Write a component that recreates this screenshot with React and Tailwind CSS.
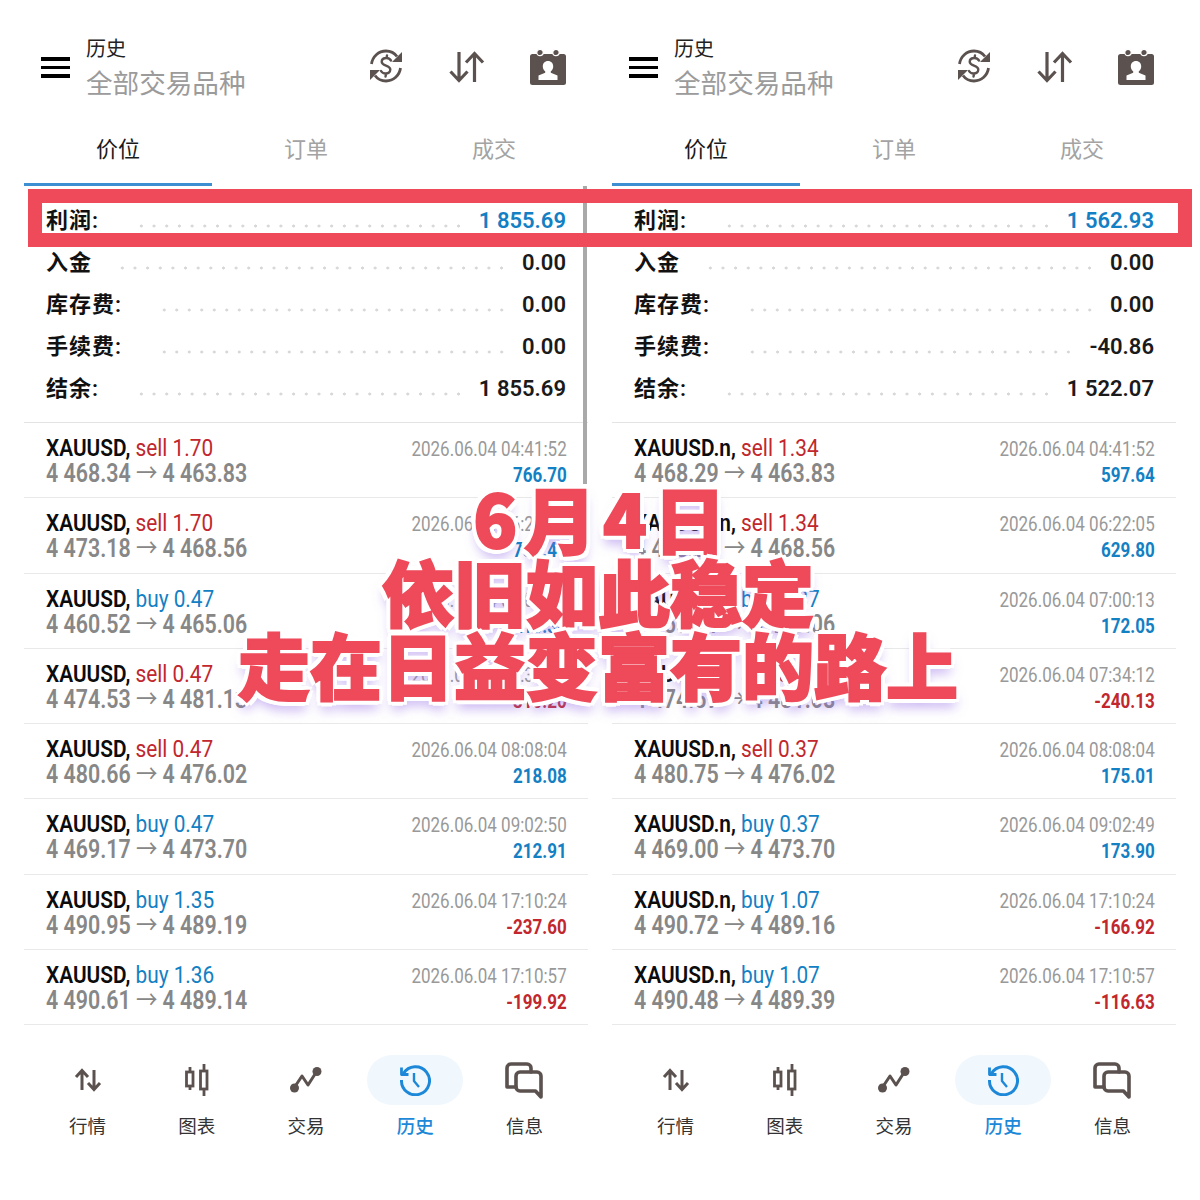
import React from 'react';

const FONT = "font-['Roboto','Noto_Sans_CJK_SC',sans-serif]";

const panels = [
  {
    profit: '1 855.69',
    fee: '0.00',
    balance: '1 855.69',
    trades: [
      ['XAUUSD,', 'sell 1.70', '4 468.34', '4 463.83', '2026.06.04 04:41:52', '766.70'],
      ['XAUUSD,', 'sell 1.70', '4 473.18', '4 468.56', '2026.06.04 06:22:05', '785.40'],
      ['XAUUSD,', 'buy 0.47', '4 460.52', '4 465.06', '2026.06.04 07:00:13', '213.38'],
      ['XAUUSD,', 'sell 0.47', '4 474.53', '4 481.13', '2026.06.04 07:34:12', '-310.20'],
      ['XAUUSD,', 'sell 0.47', '4 480.66', '4 476.02', '2026.06.04 08:08:04', '218.08'],
      ['XAUUSD,', 'buy 0.47', '4 469.17', '4 473.70', '2026.06.04 09:02:50', '212.91'],
      ['XAUUSD,', 'buy 1.35', '4 490.95', '4 489.19', '2026.06.04 17:10:24', '-237.60'],
      ['XAUUSD,', 'buy 1.36', '4 490.61', '4 489.14', '2026.06.04 17:10:57', '-199.92'],
    ],
  },
  {
    profit: '1 562.93',
    fee: '-40.86',
    balance: '1 522.07',
    trades: [
      ['XAUUSD.n,', 'sell 1.34', '4 468.29', '4 463.83', '2026.06.04 04:41:52', '597.64'],
      ['XAUUSD.n,', 'sell 1.34', '4 473.26', '4 468.56', '2026.06.04 06:22:05', '629.80'],
      ['XAUUSD.n,', 'buy 0.37', '4 460.41', '4 465.06', '2026.06.04 07:00:13', '172.05'],
      ['XAUUSD.n,', 'sell 0.37', '4 474.59', '4 481.08', '2026.06.04 07:34:12', '-240.13'],
      ['XAUUSD.n,', 'sell 0.37', '4 480.75', '4 476.02', '2026.06.04 08:08:04', '175.01'],
      ['XAUUSD.n,', 'buy 0.37', '4 469.00', '4 473.70', '2026.06.04 09:02:49', '173.90'],
      ['XAUUSD.n,', 'buy 1.07', '4 490.72', '4 489.16', '2026.06.04 17:10:24', '-166.92'],
      ['XAUUSD.n,', 'buy 1.07', '4 490.48', '4 489.39', '2026.06.04 17:10:57', '-116.63'],
    ],
  },
];

const SyncDollarIcon = () => (
  <svg width="36" height="36" viewBox="0 0 36 36" fill="none" stroke="#5b5250" strokeWidth="2.800" strokeLinejoin="round">
    <path d="M3.500 16C4.500 8.500 10.500 3 18 3c4.500 0 8.500 2 11 5.500" />
    <path d="M32.500 20C31.500 27.500 25.500 33 18 33c-4.500 0-8.500-2-11-5.500" />
    <path d="M34 4v10H24z" fill="#5b5250" stroke="none" />
    <path d="M2 32V22h10z" fill="#5b5250" stroke="none" />
    <path d="M23 12.500c-1-1.500-2.500-2.500-4.500-2.500-2.800 0-4.800 1.500-4.800 3.800 0 4.700 8.600 3 8.600 7.800 0 2.400-2 3.900-4.600 3.900-2.100 0-3.800-.9-4.700-2.500M19 7.500l-.5 2.500M18 26l-.5 2.500" strokeWidth="2.400" strokeLinecap="round" />
  </svg>
);

const SortIcon = () => (
  <svg width="36" height="36" viewBox="0 0 36 36" fill="none" stroke="#5b5250" strokeWidth="3.200" strokeLinejoin="miter">
    <path d="M10 4v28M1.500 23.500 10 32.500l8.500-9" />
    <path d="M25.500 34V5.500M17 14.500l8.500-9 8.500 9" />
  </svg>
);

const CalendarPersonIcon = () => (
  <svg width="38" height="38" viewBox="0 0 38 38">
    <rect x="1" y="6" width="36" height="31" rx="2.500" fill="#5b5250" />
    <circle cx="11" cy="4.500" r="3.200" fill="#5b5250" stroke="#fff" strokeWidth="1.200" />
    <circle cx="27" cy="4.500" r="3.200" fill="#5b5250" stroke="#fff" strokeWidth="1.200" />
    <path d="M19 13c3.200 0 5.200 2.300 5.200 5.400 0 2-1 3.800-2.400 4.800v1.600l6.700 2.800V32H9.500v-4.400l6.700-2.800v-1.600c-1.400-1-2.400-2.800-2.400-4.800 0-3.100 2-5.400 5.200-5.400z" fill="#fff" />
  </svg>
);

const navItems = [
  {
    label: '行情',
    icon: (
      <svg width="28" height="26" viewBox="0 0 28 26" fill="none" stroke="#5b5250" strokeWidth="3">
        <path d="M8 23V4M2 10l6-6.500L14 10" />
        <path d="M20 3v19M14 16l6 6.500 6-6.500" />
      </svg>
    ),
  },
  {
    label: '图表',
    icon: (
      <svg width="28" height="32" viewBox="0 0 28 32" fill="none" stroke="#5b5250" strokeWidth="2.800">
        <path d="M7 3v5M7 22v4M21 0v7M21 25v7" />
        <rect x="3.500" y="8" width="6.500" height="14" />
        <rect x="17.500" y="7" width="6.500" height="18" />
      </svg>
    ),
  },
  {
    label: '交易',
    icon: (
      <svg width="34" height="28" viewBox="0 0 34 28" fill="none" stroke="#5b5250" strokeWidth="3" strokeLinejoin="round">
        <path d="M5 22 13 10l6 9 9-14" />
        <circle cx="5.500" cy="22" r="4.500" fill="#5b5250" stroke="none" />
        <circle cx="28" cy="5.500" r="4.500" fill="#5b5250" stroke="none" />
      </svg>
    ),
  },
  {
    label: '历史',
    active: true,
    icon: (
      <svg width="32" height="32" viewBox="0 0 32 32" fill="none" stroke="#1e88d8" strokeWidth="3" strokeLinejoin="round">
        <path d="M4.500 9.500A14 14 0 1 1 2.500 16" />
        <path d="M2.500 3.500v7h7" strokeWidth="2.800" />
        <path d="M15 9v8l5 6" strokeWidth="2.400" />
      </svg>
    ),
  },
  {
    label: '信息',
    icon: (
      <svg width="38" height="37" viewBox="0 0 38 37" fill="none" stroke="#5b5250" strokeWidth="3.600" strokeLinejoin="round" strokeLinecap="round">
        <path d="M11 25H7l-5 0V6a4 4 0 0 1 4-4h16a4 4 0 0 1 4 4v4" />
        <path d="M15 10h17a4 4 0 0 1 4 4v21l-5.500-6H15a4 4 0 0 1-4-4V14a4 4 0 0 1 4-4z" />
      </svg>
    ),
  },
];

const SummaryRow = ({ label, value, gap, blue }) => (
  <div className="flex h-[42px] items-center">
    <span className="text-[22px] font-semibold leading-none tracking-[1px] text-[#111]">{label}</span>
    <span
      className={`${gap} mr-[14px] mt-[10px] h-[4px] flex-1 bg-[radial-gradient(circle,#d8d8d8_1.3px,transparent_1.8px)] bg-[length:12.6px_4px] bg-repeat-round`}
    />
    <span className={`text-[22px] font-semibold leading-none ${blue ? 'text-[#1380c4]' : 'text-[#1a1a1a]'}`}>{value}</span>
  </div>
);

const TradeRow = ({ trade }) => {
  const [symbol, side, open, close, date, amount] = trade;
  const isSell = side.startsWith('sell');
  const isLoss = amount.startsWith('-');
  return (
    <div className="flex h-[75.25px] justify-between border-b border-[#e9e9e9] pl-[22px] pr-[21px] pt-[11px]">
      <div className="flex w-[300px] origin-left scale-x-[0.85] flex-col">
        <div className="whitespace-nowrap text-[24.5px] leading-[27px]">
          <span className="font-semibold text-[#0c0c0c]">{symbol}</span>{' '}
          <span className={isSell ? 'text-[#c1272d]' : 'text-[#1380c4]'}>{side}</span>
        </div>
        <div className="flex items-center whitespace-nowrap text-[25.200px] font-semibold leading-[26px] text-[#878787]">
          {open}
          <span className="mx-[6px] font-normal">→</span>
          {close}
        </div>
      </div>
      <div className="mt-[2px] flex origin-right scale-x-[0.81] flex-col items-end">
        <div className="whitespace-nowrap text-[21px] leading-[26px] text-[#999]">{date}</div>
        <div className={`text-[21px] font-bold leading-[26px] ${isLoss ? 'text-[#c1272d]' : 'text-[#1380c4]'}`}>{amount}</div>
      </div>
    </div>
  );
};

const Panel = ({ data }) => (
  <div className="w-[588px] shrink-0">
    <div className="flex h-[126px]">
      <div className="flex w-[62px] flex-col gap-[5px] pl-[41px] pt-[57px]">
        <div className="h-[3.500px] w-[29px] shrink-0 bg-black" />
        <div className="h-[3.500px] w-[29px] shrink-0 bg-black" />
        <div className="h-[3.500px] w-[29px] shrink-0 bg-black" />
      </div>
      <div className="ml-6 w-[220px] pt-[37px]">
        <div className="text-[20px] leading-[24px] text-[#222]">历史</div>
        <div className="mt-[5px] text-[26.6px] leading-[36px] text-[#9b9b9b]">全部交易品种</div>
      </div>
      <div className="ml-auto grid w-[243px] grid-cols-3 justify-items-center pt-[48px]">
        <SyncDollarIcon />
        <SortIcon />
        <CalendarPersonIcon />
      </div>
    </div>

    <div className="ml-6 flex h-[60px] w-[564px]">
      <div className="flex w-[188px] items-start justify-center border-b-[3px] border-[#3d8fd1] pt-[10px] text-[22px] leading-[28px] text-[#1a1a1a]">价位</div>
      <div className="flex w-[188px] items-start justify-center pt-[10px] text-[22px] leading-[28px] text-[#a3a3a3]">订单</div>
      <div className="flex w-[188px] items-start justify-center pt-[10px] text-[22px] leading-[28px] text-[#a3a3a3]">成交</div>
    </div>

    <div className="ml-6 w-[564px]">
      <div className="h-[237px] border-b border-[#e4e4e4] pl-[22px] pr-[22px] pt-[14px]">
        <SummaryRow label="利润:" value={data.profit} gap="ml-[36px]" blue />
        <SummaryRow label="入金" value="0.00" gap="ml-[24px]" />
        <SummaryRow label="库存费:" value="0.00" gap="ml-[36px]" />
        <SummaryRow label="手续费:" value={data.fee} gap="ml-[36px]" />
        <SummaryRow label="结余:" value={data.balance} gap="ml-[36px]" />
      </div>
      {data.trades.map((trade) => (
        <TradeRow key={trade[4]} trade={trade} />
      ))}
    </div>

    <div className="ml-[33px] mt-[30px] grid w-[546px] grid-cols-5">
      {navItems.map((item) => (
        <div key={item.label} className="flex flex-col items-center">
          <div className={`flex h-[50px] w-[96px] items-center justify-center rounded-full ${item.active ? 'bg-[#f0f7fd]' : ''}`}>
            {item.icon}
          </div>
          <div className={`mt-[9px] text-[18.500px] leading-[26px] ${item.active ? 'font-medium text-[#1e88d8]' : 'text-[#333]'}`}>{item.label}</div>
        </div>
      ))}
    </div>
  </div>
);

export default function App() {
  return (
    <div className={`relative flex h-[1200px] w-[1200px] overflow-hidden bg-white ${FONT}`}>
      {panels.map((data) => (
        <Panel key={data.profit} data={data} />
      ))}

      {/* divider between the two screenshots */}
      <div className="absolute left-[583px] top-[186px] h-[298px] w-[4px] bg-[#a9a9a9]" />

      {/* red highlight round the profit row */}
      <div className="absolute left-[28px] top-[189px] h-[58px] w-[1164px] border-[14px] border-[#ee4a5a]" />

      {/* caption over the lists: red stroke thickens the glyphs, shadows make the white halo */}
      <div className="absolute left-0 top-[480px] flex w-[1196px] flex-col items-center font-['Noto_Sans_CJK_SC',sans-serif] text-[72px] font-black leading-[73px] text-[#ee4a5a] [-webkit-text-stroke:2px_#ee4a5a] [text-shadow:5px_0_0_#fff,-5px_0_0_#fff,0_5px_0_#fff,0_-5px_0_#fff,4px_4px_0_#fff,-4px_4px_0_#fff,4px_-4px_0_#fff,-4px_-4px_0_#fff,0_9px_12px_rgba(150,110,230,0.55)]">
        <div className="ml-[10px] tracking-[7px]">6月4日</div>
        <div>依旧如此稳定</div>
        <div>走在日益变富有的路上</div>
      </div>
    </div>
  );
}
